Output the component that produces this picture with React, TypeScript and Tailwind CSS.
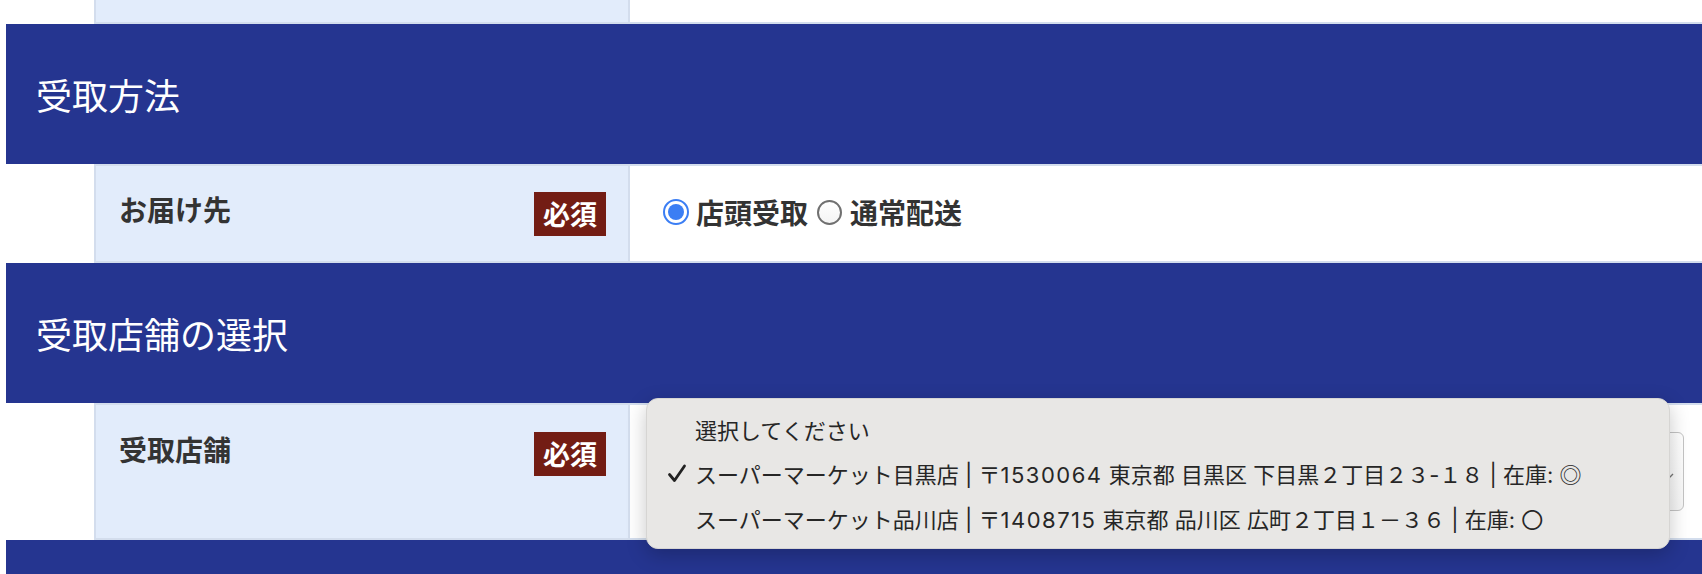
import React from "react";

const Badge = () => (
  <span className="h-[44px] px-[9px] bg-[#731d14] text-white font-bold text-[27px] leading-[44px] whitespace-nowrap">
    必須
  </span>
);

const SectionHeader = ({ title }: { title: string }) => (
  <div className="ml-[6px] h-[140px] bg-[#253590] flex items-center pl-[30px] text-white text-[36px] leading-none">
    {title}
  </div>
);

const CheckedRadio = () => (
  <span className="block w-[26px] h-[26px] rounded-full border-[2px] border-[#3b7ef4] bg-white flex items-center justify-center shrink-0">
    <span className="block w-[16px] h-[16px] rounded-full bg-[#3b7ef4]" />
  </span>
);

const UncheckedRadio = () => (
  <span className="block w-[25px] h-[25px] rounded-full border-2 border-[#707070] bg-gradient-to-b from-white to-[#f4f4f4] shrink-0" />
);

const L = ({ children }: { children: React.ReactNode }) => (
  <span className="font-['Inter',sans-serif]">{children}</span>
);

const D = ({ children }: { children: React.ReactNode }) => (
  <span className="font-['Inter',sans-serif] tracking-[1.5px]">{children}</span>
);

export default function App() {
  return (
    <div className="relative w-[1702px] h-[574px] overflow-hidden bg-white font-['Noto_Sans_CJK_JP',sans-serif] text-[#333]">
      {/* top leftover row */}
      <div className="ml-[94px] flex h-[24px] border-b-2 border-[#d3dded]">
        <div className="w-[536px] bg-[#e2ecfb] border-x-2 border-[#d3dded]" />
        <div className="flex-1 bg-white" />
      </div>

      <SectionHeader title="受取方法" />

      {/* row: お届け先 */}
      <div className="ml-[94px] flex h-[99px] border-y-2 border-[#d3dded]">
        <div className="w-[536px] bg-[#e2ecfb] border-x-2 border-[#d3dded] flex justify-between items-start pl-[23px] pr-[22px] pt-[26px]">
          <span className="text-[28px] font-bold leading-[34px] text-[#333]">お届け先</span>
          <Badge />
        </div>
        <div className="flex-1 bg-white flex items-center pl-[33px] pb-[3px]">
          <CheckedRadio />
          <span className="ml-[7px] text-[28px] font-bold leading-none text-[#333]">店頭受取</span>
          <span className="ml-[9px]">
            <UncheckedRadio />
          </span>
          <span className="ml-[8px] text-[28px] font-bold leading-none text-[#333]">通常配送</span>
        </div>
      </div>

      <SectionHeader title="受取店舗の選択" />

      {/* row: 受取店舗 */}
      <div className="ml-[94px] flex h-[137px] border-y-2 border-[#d3dded]">
        <div className="w-[536px] bg-[#e2ecfb] border-x-2 border-[#d3dded] flex justify-between items-start pl-[23px] pr-[22px] pt-[27px]">
          <span className="text-[28px] font-bold leading-[34px] text-[#333]">受取店舗</span>
          <Badge />
        </div>
        <div className="flex-1 bg-white pl-[33px] pr-[18px] pt-[27px]">
          <div className="relative h-[79px] rounded-[6px] border border-[#c4c4c4] bg-gradient-to-b from-white to-[#f6f6f6]">
            <svg
              className="absolute right-[8px] top-[32px]"
              width="10"
              height="14"
              viewBox="0 0 10 14"
            >
              <path d="M2 9 L5 12 L8 9" fill="none" stroke="#777" strokeWidth="1.4" />
            </svg>
          </div>
        </div>
      </div>

      <div className="ml-[6px] h-[40px] bg-[#253590]" />

      {/* open dropdown menu */}
      <div className="absolute left-[646px] top-[398px] w-[1024px] h-[151px] rounded-[12px] bg-[#e8e7e5] border border-[#d6d5d3] shadow-[0_6px_20px_rgba(0,0,0,0.22)] pt-[7px] text-[22px] text-[#262626] font-['Noto_Sans_CJK_JP',sans-serif]">
        <div className="relative h-[45px] flex items-center pl-[48px] leading-none">
          <span>選択してください</span>
        </div>
        <div className="relative h-[45px] flex items-center pl-[48px] leading-none whitespace-pre">
          <svg className="absolute left-[20px] top-[13px]" width="20" height="19" viewBox="0 0 20 19">
            <path d="M2.5 10.5 L7.5 16.5 L17.5 2" fill="none" stroke="#222" strokeWidth="2.8" strokeLinecap="round" strokeLinejoin="round" />
          </svg>
          <span>
            スーパーマーケット目黒店<L> | </L>〒<D>1530064</D><L> </L>東京都<L> </L>目黒区<L> </L>下目黒２丁目２３<L>-</L>１８<L> | </L>在庫<L>: </L>◎
          </span>
        </div>
        <div className="relative h-[45px] flex items-center pl-[48px] leading-none whitespace-pre">
          <span>
            スーパーマーケット品川店<L> | </L>〒<D>1408715</D><L> </L>東京都<L> </L>品川区<L> </L>広町２丁目１－３６<L> | </L>在庫<L>: </L>〇
          </span>
        </div>
      </div>
    </div>
  );
}
